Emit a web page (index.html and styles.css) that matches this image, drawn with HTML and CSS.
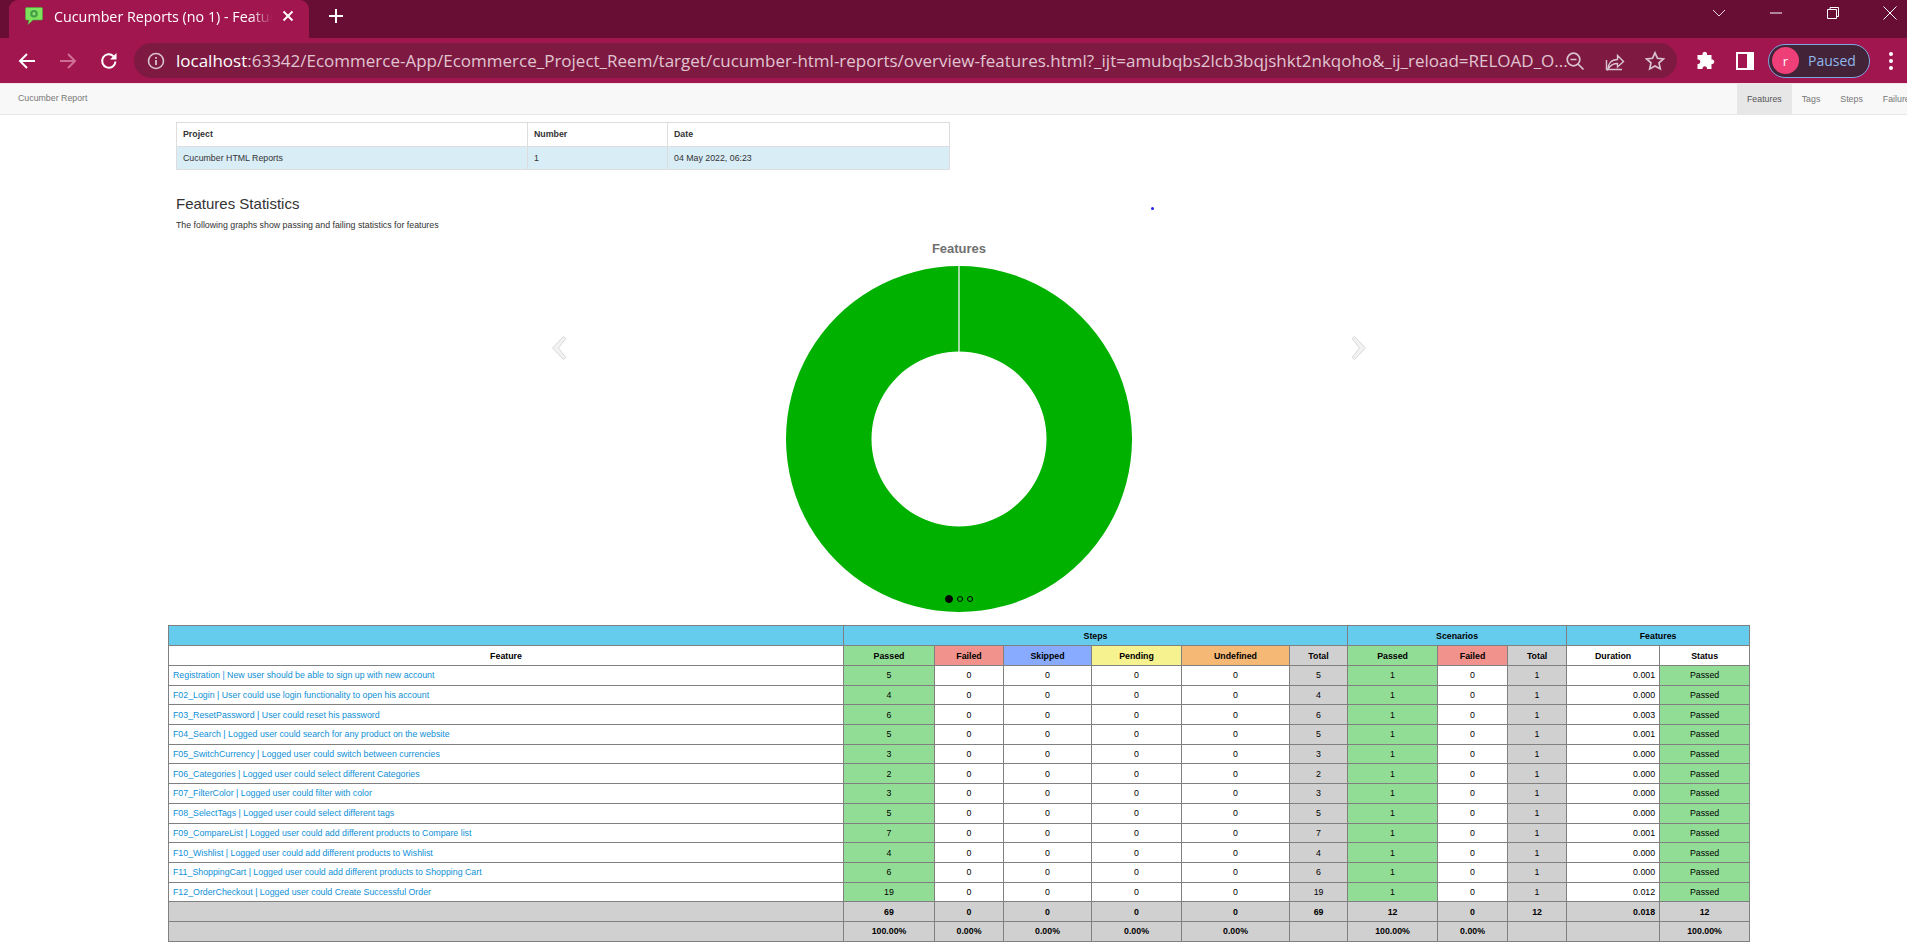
FILE: index.html
```html
<!DOCTYPE html>
<html lang="en">
<head>
<meta charset="utf-8">
<title>Cucumber Reports (no 1) - Features Overview</title>
<link rel="stylesheet" href="styles.css">
</head>
<body>
<div class="browser">
  <div class="tabstrip">
    <div class="tab-gap"></div>
    <div class="tab">
      <svg class="favicon" viewBox="0 0 18 18"><path d="M1.5 0.5h15a1 1 0 0 1 1 1v10.5a1 1 0 0 1-1 1H8l-5 4.5 1-4.5H1.5a1 1 0 0 1-1-1V1.500a1 1 0 0 1 1-1z" fill="#7fe25f" stroke="#4aa83a" stroke-width=".6"/><circle cx="9" cy="6.800" r="3.800" fill="#3f9f45"/><circle cx="9" cy="6.800" r="1.700" fill="#8fdc6f"/></svg>
      <span class="tab-title">Cucumber Reports (no 1) - Features Overview</span>
      <svg class="tab-x" viewBox="0 0 12 12"><path d="M1.500 1.500l9 9M10.500 1.500l-9 9" stroke="#fff" stroke-width="1.900" fill="none"/></svg>
    </div>
    <svg class="newtab" viewBox="0 0 16 16"><path d="M8 1v14M1 8h14" stroke="#fff" stroke-width="2" fill="none"/></svg>
    <div class="winctl">
      <svg class="ctl" viewBox="0 0 16 16"><path d="M2 5l6 6 6-6" stroke="#e9d7df" stroke-width="1" fill="none"/></svg>
      <svg class="ctl" viewBox="0 0 16 16"><path d="M2 8h12" stroke="#fff" stroke-width="1" fill="none"/></svg>
      <svg class="ctl" viewBox="0 0 16 16"><path d="M2.500 4.500h9v9h-9zM5 4.500V2.500h8.500v9h-2" stroke="#fff" stroke-width="1" fill="none"/></svg>
      <svg class="ctl" viewBox="0 0 16 16"><path d="M1.500 1.500l13 13M14.500 1.500l-13 13" stroke="#fff" stroke-width="1" fill="none"/></svg>
    </div>
  </div>
  <div class="toolbar">
    <svg class="nav-ico" viewBox="0 0 20 20"><path d="M18 10H3M10 3l-7 7 7 7" stroke="#fff" stroke-width="2" fill="none"/></svg>
    <svg class="nav-ico dim" viewBox="0 0 20 20"><path d="M2 10h15M10 3l7 7-7 7" stroke="#cf6f95" stroke-width="2" fill="none"/></svg>
    <svg class="nav-ico" viewBox="0 0 20 20"><path d="M16.500 10.500a6.700 6.700 0 1 1-2-5.300" stroke="#fff" stroke-width="2" fill="none"/><path d="M17.500 2v6.500H11z" fill="#fff"/></svg>
    <div class="omnibox">
      <svg class="info" viewBox="0 0 18 18"><circle cx="9" cy="9" r="7.500" stroke="#d9c3cd" stroke-width="1.600" fill="none"/><path d="M9 8v5M9 5v1.800" stroke="#d9c3cd" stroke-width="1.800" fill="none"/></svg>
      <span class="url"><span class="host">localhost</span>:63342/Ecommerce-App/Ecommerce_Project_Reem/target/cucumber-html-reports/overview-features.html?_ijt=amubqbs2lcb3bqjshkt2nkqoho&amp;_ij_reload=RELOAD_O...</span>
      <svg class="omni-ico" viewBox="0 0 20 20"><circle cx="8.500" cy="8.500" r="6.300" stroke="#d9c3cd" stroke-width="1.700" fill="none"/><path d="M13 13l5.500 5.500M5.500 8.500h6" stroke="#d9c3cd" stroke-width="1.700" fill="none"/></svg>
      <svg class="omni-ico" viewBox="0 0 20 20"><path d="M1.500 9v9.500h15.500M3 18c0-5 3-9.500 9.500-9.500V4.500l6 6-6 5.500v-3.500c-4 0-7 1.500-9.500 5.500z" stroke="#d9c3cd" stroke-width="1.400" fill="none"/></svg>
      <svg class="omni-ico last" viewBox="0 0 20 20"><path d="M10 1.800l2.500 5.500 6 .6-4.500 4 1.300 6L10 15l-5.300 2.900 1.300-6-4.500-4 6-.6z" stroke="#d9c3cd" stroke-width="1.700" fill="none"/></svg>
    </div>
    <svg class="puzzle" viewBox="0 0 20 20"><path d="M7.500 2.500a2.300 2.300 0 0 1 4.500 0v1.500h4.500v4.500h1a2.300 2.300 0 0 1 0 4.500h-1V18H12v-1a2.300 2.300 0 0 0-4.500 0v1H2.500v-5h1a2.300 2.300 0 0 0 0-4.500h-1V4h5z" fill="#fff"/></svg>
    <svg class="panel" viewBox="0 0 18 18"><path fill="#fff" fill-rule="evenodd" d="M0 0h18v18H0zM2 2v14h9V2zM2 2"/></svg>
    <div class="profile">
      <span class="avatar">r</span>
      <span class="paused">Paused</span>
    </div>
    <svg class="kebab" viewBox="0 0 6 20"><circle cx="3" cy="3" r="2" fill="#fff"/><circle cx="3" cy="10" r="2" fill="#fff"/><circle cx="3" cy="17" r="2" fill="#fff"/></svg>
  </div>
</div>

<nav class="navbar">
  <a class="brand">Cucumber Report</a>
  <ul class="navlinks">
    <li class="active">Features</li>
    <li>Tags</li>
    <li>Steps</li>
    <li>Failures</li>
  </ul>
</nav>

<main class="page">
  <table class="build">
    <colgroup><col class="b1"><col class="b2"><col class="b3"></colgroup>
    <tr><th>Project</th><th>Number</th><th>Date</th></tr>
    <tr class="info-row"><td>Cucumber HTML Reports</td><td>1</td><td>04 May 2022, 06:23</td></tr>
  </table>

  <h2 class="title">Features Statistics</h2>
  <p class="desc">The following graphs show passing and failing statistics for features</p>

  <section class="carousel">
    <h3 class="chart-title">Features</h3>
    <svg class="donut" viewBox="0 0 346 346">
      <path fill="#00b100" fill-rule="evenodd" d="M173 0a173 173 0 1 0 .01 0zM173 85.500a87.500 87.500 0 1 1-.01 0z"/>
      <path d="M173 0v86" stroke="#d8ecd8" stroke-width="1.500"/>
    </svg>
    <svg class="chev left" viewBox="0 0 16 24"><path d="M12.500 .5L1.500 12 12.500 23.500l2.500-2-7.500-9.500L15 2.500z" fill="#f2f2f2" stroke="#d0d0d0" stroke-width=".8"/></svg>
    <svg class="chev right" viewBox="0 0 16 24"><path d="M3.500 .5L14.500 12 3.500 23.500l-2.500-2 7.500-9.500L1 2.500z" fill="#f2f2f2" stroke="#d0d0d0" stroke-width=".8"/></svg>
    <div class="dots"><span class="dot on"></span><span class="dot"></span><span class="dot"></span></div>
    <span class="speck"></span>
  </section>

  <table class="stats">
    <colgroup>
      <col class="c-feature"><col class="c1"><col class="c2"><col class="c3"><col class="c4"><col class="c5"><col class="c6"><col class="c7"><col class="c8"><col class="c9"><col class="c10"><col class="c11">
    </colgroup>
    <thead>
      <tr class="group"><th></th><th colspan="6">Steps</th><th colspan="3">Scenarios</th><th colspan="2">Features</th></tr>
      <tr>
        <th>Feature</th><th class="passed">Passed</th><th class="failed">Failed</th><th class="skipped">Skipped</th><th class="pending">Pending</th><th class="undefined">Undefined</th><th class="total">Total</th><th class="passed">Passed</th><th class="failed">Failed</th><th class="total">Total</th><th>Duration</th><th>Status</th>
      </tr>
    </thead>
    <tbody>
      <tr><td class="name"><a>Registration | New user should be able to sign up with new account</a></td><td class="passed">5</td><td>0</td><td>0</td><td>0</td><td>0</td><td class="total">5</td><td class="passed">1</td><td>0</td><td class="total">1</td><td class="dur">0.001</td><td class="passed">Passed</td></tr>
      <tr><td class="name"><a>F02_Login | User could use login functionality to open his account</a></td><td class="passed">4</td><td>0</td><td>0</td><td>0</td><td>0</td><td class="total">4</td><td class="passed">1</td><td>0</td><td class="total">1</td><td class="dur">0.000</td><td class="passed">Passed</td></tr>
      <tr><td class="name"><a>F03_ResetPassword | User could reset his password</a></td><td class="passed">6</td><td>0</td><td>0</td><td>0</td><td>0</td><td class="total">6</td><td class="passed">1</td><td>0</td><td class="total">1</td><td class="dur">0.003</td><td class="passed">Passed</td></tr>
      <tr><td class="name"><a>F04_Search | Logged user could search for any product on the website</a></td><td class="passed">5</td><td>0</td><td>0</td><td>0</td><td>0</td><td class="total">5</td><td class="passed">1</td><td>0</td><td class="total">1</td><td class="dur">0.001</td><td class="passed">Passed</td></tr>
      <tr><td class="name"><a>F05_SwitchCurrency | Logged user could switch between currencies</a></td><td class="passed">3</td><td>0</td><td>0</td><td>0</td><td>0</td><td class="total">3</td><td class="passed">1</td><td>0</td><td class="total">1</td><td class="dur">0.000</td><td class="passed">Passed</td></tr>
      <tr><td class="name"><a>F06_Categories | Logged user could select different Categories</a></td><td class="passed">2</td><td>0</td><td>0</td><td>0</td><td>0</td><td class="total">2</td><td class="passed">1</td><td>0</td><td class="total">1</td><td class="dur">0.000</td><td class="passed">Passed</td></tr>
      <tr><td class="name"><a>F07_FilterColor | Logged user could filter with color</a></td><td class="passed">3</td><td>0</td><td>0</td><td>0</td><td>0</td><td class="total">3</td><td class="passed">1</td><td>0</td><td class="total">1</td><td class="dur">0.000</td><td class="passed">Passed</td></tr>
      <tr><td class="name"><a>F08_SelectTags | Logged user could select different tags</a></td><td class="passed">5</td><td>0</td><td>0</td><td>0</td><td>0</td><td class="total">5</td><td class="passed">1</td><td>0</td><td class="total">1</td><td class="dur">0.000</td><td class="passed">Passed</td></tr>
      <tr><td class="name"><a>F09_CompareList | Logged user could add different products to Compare list</a></td><td class="passed">7</td><td>0</td><td>0</td><td>0</td><td>0</td><td class="total">7</td><td class="passed">1</td><td>0</td><td class="total">1</td><td class="dur">0.001</td><td class="passed">Passed</td></tr>
      <tr><td class="name"><a>F10_Wishlist | Logged user could add different products to Wishlist</a></td><td class="passed">4</td><td>0</td><td>0</td><td>0</td><td>0</td><td class="total">4</td><td class="passed">1</td><td>0</td><td class="total">1</td><td class="dur">0.000</td><td class="passed">Passed</td></tr>
      <tr><td class="name"><a>F11_ShoppingCart | Logged user could add different products to Shopping Cart</a></td><td class="passed">6</td><td>0</td><td>0</td><td>0</td><td>0</td><td class="total">6</td><td class="passed">1</td><td>0</td><td class="total">1</td><td class="dur">0.000</td><td class="passed">Passed</td></tr>
      <tr><td class="name"><a>F12_OrderCheckout | Logged user could Create Successful Order</a></td><td class="passed">19</td><td>0</td><td>0</td><td>0</td><td>0</td><td class="total">19</td><td class="passed">1</td><td>0</td><td class="total">1</td><td class="dur">0.012</td><td class="passed">Passed</td></tr>
    </tbody>
    <tfoot>
      <tr><td></td><td>69</td><td>0</td><td>0</td><td>0</td><td>0</td><td>69</td><td>12</td><td>0</td><td>12</td><td class="dur">0.018</td><td>12</td></tr>
      <tr><td></td><td>100.00%</td><td>0.00%</td><td>0.00%</td><td>0.00%</td><td>0.00%</td><td></td><td>100.00%</td><td>0.00%</td><td></td><td></td><td>100.00%</td></tr>
    </tfoot>
  </table>
</main>
</body>
</html>
```
FILE: styles.css
```css
* { box-sizing: border-box; }
html, body { margin: 0; padding: 0; height: 943px; overflow: hidden; background: #fff; }
body { font-family: "Liberation Sans", Arial, sans-serif; font-size: 8.8px; color: #333; }

.browser { font-family: "Open Sans", "Noto Sans", sans-serif; }
.tabstrip { display: flex; align-items: flex-start; height: 38px; background: #680d33; }
.tab-gap { width: 9px; }
.tab { width: 300px; height: 38px; background: #a21650; border-radius: 9px 9px 0 0; display: flex; align-items: center; padding: 0 15px 6px 16px; }
.favicon { width: 18px; height: 18px; flex: none; }
.tab-title { margin: 0 10px 0 11px; width: 218px; overflow: hidden; white-space: nowrap; color: #fff; font-size: 14.300px; -webkit-mask-image: linear-gradient(to right, #000 90%, transparent); mask-image: linear-gradient(to right, #000 90%, transparent); }
.tab-x { width: 12px; height: 12px; flex: none; }
.newtab { width: 16px; height: 16px; margin: 8px 0 0 19px; flex: none; }
.winctl { margin-left: auto; display: flex; gap: 41px; padding: 5px 9px 0 0; }
.ctl { width: 16px; height: 16px; }

.toolbar { display: flex; align-items: center; height: 45px; background: #a21650; padding: 0 0 0 17px; }
.nav-ico { width: 20px; height: 20px; margin-right: 21px; flex: none; }
.omnibox { width: 1543px; height: 35px; margin-left: -6px; border-radius: 18px; background: #7e1a42; display: flex; align-items: center; padding: 0 12px 0 13px; flex: none; }
.info { width: 18px; height: 18px; flex: none; }
.url { margin-left: 11px; flex: 1; min-width: 0; white-space: nowrap; font-size: 17px; color: #e0c5d1; }
.host { color: #fff; }
.omni-ico { width: 20px; height: 20px; margin-left: 20px; flex: none; }
.puzzle { width: 20px; height: 20px; margin-left: 18px; flex: none; }
.panel { width: 18px; height: 18px; margin-left: 21px; flex: none; }
.profile { width: 102px; height: 34px; margin-left: 14px; border: 1.5px solid #7aa7e0; border-radius: 17px; background: #432338; display: flex; align-items: center; padding-left: 3px; flex: none; }
.avatar { width: 27px; height: 27px; border-radius: 50%; background: #ee3f78; color: #fff; font-size: 13px; display: flex; align-items: center; justify-content: center; }
.paused { margin-left: 9px; color: #8fb8ee; font-size: 14px; }
.kebab { width: 6px; height: 20px; margin-left: 18px; flex: none; }

.navbar { height: 32px; background: #f8f8f8; border-top: 1px solid #f1e4ea; border-bottom: 1px solid #e7e7e7; display: flex; justify-content: space-between; padding-left: 18px; color: #777; overflow: hidden; }
.brand { line-height: 29px; color: #777; }
.navlinks { display: flex; list-style: none; margin: 0; padding: 0; width: 170px; flex: none; }
.navlinks li { padding: 0 10px; line-height: 30px; white-space: nowrap; flex: none; }
.navlinks .active { background: #e7e7e7; color: #555; }

.page { padding: 7px 0 0 0; }
.build { width: 773px; margin-left: 176px; border-collapse: collapse; table-layout: fixed; color: #333; }
.b1 { width: 351px; }
.b2 { width: 140px; }
.b3 { width: 282px; }
.build th, .build td { border: 1px solid #ddd; height: 23.500px; padding: 0 6px; text-align: left; vertical-align: middle; }
.build th { font-weight: bold; }
.info-row td { background: #d9edf7; }

.title { margin: 24px 0 0 176px; font-size: 15px; line-height: 20px; font-weight: normal; color: #333; }
.desc { margin: 5px 0 0 176px; line-height: 12px; color: #333; }

.carousel { position: relative; width: 1566px; height: 386px; margin: 8px 0 0 176px; display: flex; flex-direction: column; align-items: center; }
.chart-title { margin: 0; height: 26.500px; line-height: 19px; font-size: 13px; font-weight: bold; color: #707070; }
.donut { width: 346px; height: 346px; flex: none; }
.chev { position: absolute; top: 97px; width: 16px; height: 24px; }
.chev.left { left: 375px; }
.chev.right { left: 1175px; }
.dots { position: absolute; top: 356px; left: 769px; display: flex; align-items: center; gap: 4px; }
.dot { width: 6px; height: 6px; border: 1px solid #000; border-radius: 50%; }
.dot.on { width: 8px; height: 8px; background: #000; }
.speck { position: absolute; left: 975px; top: -32px; width: 3px; height: 3px; background: #2222ee; border-radius: 50%; }

.stats { width: 1581px; margin-left: 168px; border-collapse: collapse; table-layout: fixed; color: #000; }
.c-feature { width: 675px; }
.c1 { width: 91px; }
.c2 { width: 69px; }
.c3 { width: 88px; }
.c4 { width: 90px; }
.c5 { width: 108px; }
.c6 { width: 58px; }
.c7 { width: 90px; }
.c8 { width: 70px; }
.c9 { width: 59px; }
.c10 { width: 93px; }
.c11 { width: 90px; }
.stats th, .stats td { border: 1px solid #808080; height: 19.700px; padding: 0 4px; text-align: center; vertical-align: middle; white-space: nowrap; overflow: hidden; }
.stats th { font-weight: bold; }
.stats .group th { background: #66ccee; height: 20px; }
.stats thead tr:nth-child(2) th { height: 20px; }
.stats td.name { text-align: left; }
.stats a { color: #0e8fd6; }
.stats td.dur { text-align: right; }
.stats .passed { background: #92dd96; }
.stats .failed { background: #f2928c; }
.stats .skipped { background: #88aaff; }
.stats .pending { background: #f5f28f; }
.stats .undefined { background: #f5b975; }
.stats .total { background: #d0d0d0; }
.stats tfoot td { background: #d0d0d0; font-weight: bold; }
```
